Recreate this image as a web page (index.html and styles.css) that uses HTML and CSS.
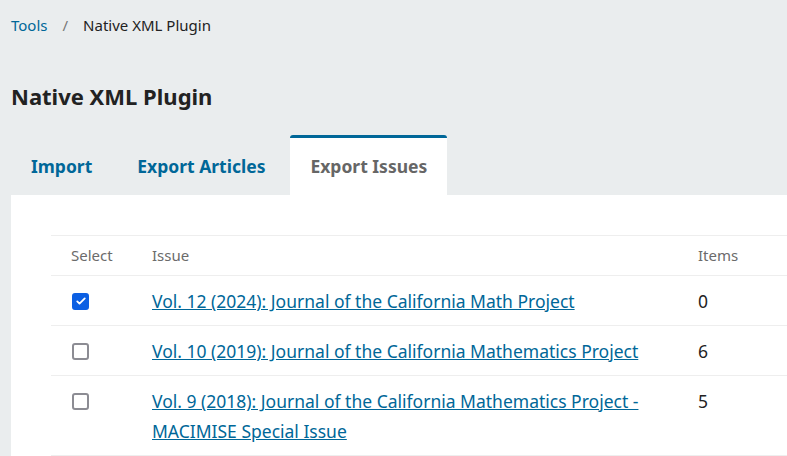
FILE: index.html
```html
<!DOCTYPE html>
<html>
<head>
<meta charset="utf-8">
<link rel="stylesheet" href="styles.css">
</head>
<body>
<div class="page">
  <nav class="breadcrumb">
    <a class="crumb-link" href="#">Tools</a>
    <span class="sep">/</span>
    <span class="crumb-current">Native XML Plugin</span>
  </nav>
  <h1 class="title">Native XML Plugin</h1>
  <div class="tabs">
    <div class="tab">Import</div>
    <div class="tab">Export Articles</div>
    <div class="tab active">Export Issues</div>
  </div>
  <div class="panel">
    <table class="issues">
      <colgroup>
        <col class="c-select">
        <col class="c-issue">
        <col class="c-items">
      </colgroup>
      <thead>
        <tr><th>Select</th><th>Issue</th><th>Items</th></tr>
      </thead>
      <tbody>
        <tr>
          <td><span class="cb checked"><svg viewBox="0 0 16 16" width="12" height="12"><path d="M3 8.5l3 3 7-7" fill="none" stroke="#fff" stroke-width="2.4" stroke-linecap="round" stroke-linejoin="round"/></svg></span></td>
          <td><a href="#">Vol. 12 (2024): Journal of the California Math Project</a></td>
          <td>0</td>
        </tr>
        <tr>
          <td><span class="cb"></span></td>
          <td><a href="#">Vol. 10 (2019): Journal of the California Mathematics Project</a></td>
          <td>6</td>
        </tr>
        <tr>
          <td><span class="cb"></span></td>
          <td><a href="#">Vol. 9 (2018): Journal of the California Mathematics Project - MACIMISE Special Issue</a></td>
          <td>5</td>
        </tr>
      </tbody>
    </table>
  </div>
</div>
</body>
</html>
```

FILE: styles.css
```css
html, body {
  margin: 0;
  padding: 0;
  background: #eaedee;
  font-family: "Noto Sans", "Open Sans", sans-serif;
  color: #222;
  overflow: hidden;
}
.page {
  padding-left: 11px;
}
.breadcrumb {
  display: flex;
  align-items: center;
  height: 20px;
  padding-top: 15px;
  font-size: 15px;
  line-height: 20px;
}
.crumb-link {
  color: #006798;
  text-decoration: none;
}
.sep {
  color: #777;
  margin: 0 15px 0 15px;
}
.crumb-current {
  color: #222;
}
.title {
  margin: 0;
  padding-top: 48px;
  font-size: 22px;
  line-height: 26px;
  font-weight: 700;
  color: #222;
}
.tabs {
  display: flex;
  gap: 5px;
  margin-top: 26px;
  height: 60px;
}
.tab {
  padding: 0 20px;
  font-size: 17.5px;
  font-weight: 700;
  color: #006798;
  line-height: 56px;
  border-top: 3px solid transparent;
}
.tab.active {
  background: #fff;
  color: #666;
  border-top-color: #006798;
  border-top-left-radius: 3px;
  border-top-right-radius: 3px;
}
.panel {
  background: #fff;
  padding: 40px 0 0 40px;
  height: 221px;
}
.issues {
  border-collapse: collapse;
  table-layout: fixed;
  width: 736px;
}
.c-select { width: 81px; }
.c-issue { width: 546px; }
.c-items { width: 109px; }
.issues th, .issues td {
  text-align: left;
  vertical-align: top;
  padding: 10px 20px;
  border-top: 1px solid #eee;
  border-bottom: 1px solid #eee;
}
.issues th {
  font-size: 15px;
  font-weight: 400;
  color: #6b6b6b;
  line-height: 19px;
}
.issues td {
  font-size: 17.5px;
  line-height: 30px;
  color: #222;
  padding-top: 10px;
  padding-bottom: 9px;
}
.issues td a {
  color: #006798;
  text-decoration: underline;
}
.cb {
  display: inline-flex;
  align-items: center;
  justify-content: center;
  box-sizing: border-box;
  width: 17px;
  height: 17px;
  border: 2px solid #8c8c93;
  border-radius: 3px;
  vertical-align: middle;
  margin-top: -4px;
  margin-left: 1px;
}
.cb.checked {
  background: #0b5fe3;
  border-color: #0b5fe3;
}
```
